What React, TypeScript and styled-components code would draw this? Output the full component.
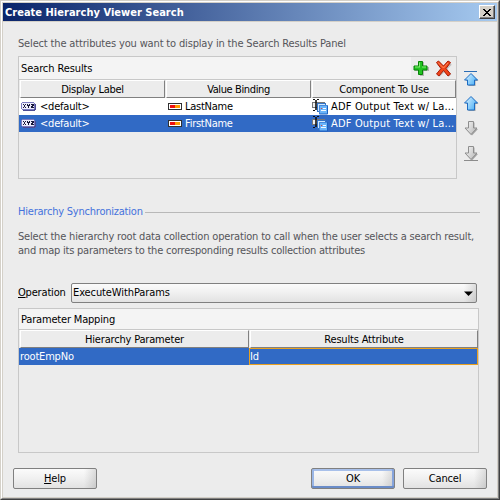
import React from "react";
import styled, { createGlobalStyle, css } from "styled-components";

const GlobalStyle = createGlobalStyle`
  *, *::before, *::after { box-sizing: border-box; }
  html, body { margin: 0; padding: 0; background: #ececec; }
  body {
    font-family: "DejaVu Sans Condensed", "DejaVu Sans", sans-serif;
    font-stretch: condensed;
    font-size: 11px;
    line-height: 14px;
    color: #000;
  }
  svg { display: block; flex: none; }
`;

const Window = styled.main`
  width: 500px;
  height: 500px;
  border: 1px solid;
  border-color: #d4d0c8 #404040 #404040 #d4d0c8;
`;
const Bevel = styled.div`
  height: 100%;
  border: 1px solid;
  border-color: #fff #808080 #808080 #fff;
`;
const Face = styled.div`
  height: 100%;
  border: 1px solid #d4d0c8;
  background: #ececec;
  display: flex;
  flex-direction: column;
`;

const TitleBar = styled.header`
  height: 19px;
  flex: none;
  display: flex;
  align-items: center;
  justify-content: space-between;
  padding: 0 2px;
  border-bottom: 1px solid #d4d0c8;
  background: linear-gradient(to right, #0a246a, #a6caf0);
  color: #fff;
`;
const Text = styled.span<{ $track?: number }>`
  white-space: nowrap;
  letter-spacing: ${(p) => p.$track ?? -0.18}px;
`;
const Title = styled(Text)`
  font-weight: bold;
  padding-top: 1px;
`;
const CloseButton = styled.button`
  width: 16px;
  height: 14px;
  padding: 0;
  display: flex;
  align-items: center;
  justify-content: center;
  background: #d4d0c8;
  border: 1px solid;
  border-color: #fff #404040 #404040 #fff;
  box-shadow: inset -1px -1px #808080;
`;

const Content = styled.div`
  flex: 1;
  display: flex;
  flex-direction: column;
  padding: 15px 17px 0 15px;
`;
const Hint = styled.p<{ $mt?: number }>`
  margin: ${(p) => p.$mt ?? 0}px 0 0;
  color: #55555a;
  display: flex;
  flex-direction: column;
`;

const ResultsArea = styled.section`
  display: flex;
  margin-top: 5px;
`;
const Panel = styled.div<{ $w: number; $h: number; $mt?: number }>`
  width: ${(p) => p.$w}px;
  height: ${(p) => p.$h}px;
  margin-top: ${(p) => p.$mt ?? 0}px;
  flex: none;
  border: 1px solid #c8c8c8;
`;
const PanelBar = styled.div<{ $h: number }>`
  height: ${(p) => p.$h}px;
  display: flex;
  justify-content: space-between;
  align-items: center;
  padding-left: 2px;
  background: #f4f4f4;
  border-bottom: 1px solid #c8c8c8;
`;
const PanelTitle = styled(Text)`
  padding-top: 2px;
`;
const PanelTools = styled.div`
  width: 45px;
  height: 100%;
  background: #ececec;
  display: flex;
  align-items: center;
  gap: 5px;
  padding-left: 2px;
`;
const Row = styled.div<{ $cols: string; $selected?: boolean }>`
  display: grid;
  grid-template-columns: ${(p) => p.$cols};
  height: 17px;
  background: ${(p) => (p.$selected ? "#316ac5" : "#fff")};
  color: ${(p) => (p.$selected ? "#fff" : "#000")};
`;
const HeadRow = styled(Row)`
  height: 18px;
  background: #ececec;
  color: #000;
`;
const HeadCell = styled.div`
  display: flex;
  align-items: center;
  justify-content: center;
  padding-top: 2px;
  margin-left: 1px;
  border: 1px solid;
  border-color: #fff #808080 #808080 #fff;
`;
const Cell = styled.div<{ $pad: number; $gap?: number; $focus?: boolean }>`
  display: flex;
  align-items: center;
  min-width: 0;
  padding-left: ${(p) => p.$pad}px;
  gap: ${(p) => p.$gap ?? 0}px;
  ${(p) => p.$focus && css`border: 1px solid #e8a020;`}
`;
const OrderButtons = styled.div`
  display: flex;
  flex-direction: column;
  gap: 9px;
  padding: 15px 0 0 7px;
`;

const SectionTitle = styled.h2`
  margin: 26px 0 0;
  height: 14px;
  display: flex;
  align-items: center;
  font-size: inherit;
  font-weight: normal;
  color: #4472dc;
`;
const Rule = styled.span`
  width: 335px;
  height: 1px;
  margin-left: auto;
  background: #b8b8b8;
`;

const OperationRow = styled.div`
  display: flex;
  align-items: center;
  height: 20px;
  margin-top: 25px;
`;
const OperationLabel = styled.label`
  width: 53px;
  flex: none;
`;
const glossy = css`
  border: 1px solid #808080;
  border-radius: 2px;
  background:
    linear-gradient(to right, transparent calc(100% - 12px), rgba(110, 110, 110, 0.22)),
    linear-gradient(to bottom, #fbfbfb 0%, #f0f0f0 50%, #e2e2e2 100%);
`;
const Combo = styled.div`
  ${glossy}
  width: 406px;
  height: 20px;
  display: flex;
  align-items: center;
  justify-content: space-between;
  padding: 0 3px 0 1px;
`;

const Footer = styled.footer`
  display: flex;
  margin: 15px -7px 0 -5px;
`;
const PushButton = styled.button<{ $primary?: boolean; $ml?: string }>`
  ${glossy}
  width: 84px;
  height: 21px;
  padding: 0;
  margin-left: ${(p) => p.$ml ?? "0"};
  font: inherit;
  color: #000;
  ${(p) =>
    p.$primary &&
    css`box-shadow: inset 0 -2px #6a8cc8, inset 2px 0 #9ab6e6, inset -2px 0 #86a4dc, inset 0 2px #a8c0ea;`}
`;

const PlusIcon = () => (
  <svg width="17" height="17" viewBox="0 0 17 17">
    <path d="M7 2h4v5h5v4h-5v5h-4v-5h-5v-4h5z" fill="#888" opacity=".55" />
    <path d="M5.500 1.500h4v4.500h4.500v4h-4.500v4.500h-4v-4.500h-4.500v-4h4.500z" fill="#22c322" stroke="#078407" strokeLinejoin="round" />
    <path d="M6.500 7v-4.500M2 7h5M9 7h4" stroke="#82ec72" fill="none" />
  </svg>
);
const DeleteIcon = () => (
  <svg width="17" height="17" viewBox="0 0 17 17">
    <path d="M3.500 3.500l11.500 12M15.500 3.500l-12 12" stroke="#999" strokeWidth="3.500" opacity=".5" />
    <path d="M1.500 2.500l2-1.500 5 5 4.500-5 2.500 1.500-4.500 6 4.500 5.500-2.500 2-4.500-5.500-4.500 5.500-2.500-2 4.500-5.500z" fill="#f0451a" stroke="#a91c06" />
    <path d="M3 2.500l5.500 5.500L13 3" stroke="#ff8a57" fill="none" />
  </svg>
);
const XyzIcon = () => (
  <svg width="15" height="9" viewBox="0 0 15 9" shapeRendering="crispEdges">
    <path d="M2 1h12v1h1v6h-1v1H2z" fill="#4c4c94" />
    <path d="M1 0h12v1h1v6h-1v1H1V7H0V1h1z" fill="#7c7cc0" />
    <rect x="1" y="1" width="12" height="6" fill="#ececfc" />
    <path
      d="M2 2h1v1h1v-1h1v1h-1v2h1v1h-1v-1h-1v1h-1v-1h1v-2h-1zM6 2h1v1h1v-1h1v2h-1v2h-1v-2h-1zM10 2h3v2h-1v1h1v1h-3v-2h1v-1h-1z"
      fill="#16163a"
    />
  </svg>
);
const BindingIcon = () => (
  <svg width="14" height="7" viewBox="0 0 14 7" shapeRendering="crispEdges">
    <rect width="14" height="7" fill="#303030" />
    <rect x="1" y="1" width="12" height="5" fill="#fff" />
    <rect x="2" y="2" width="5" height="3" fill="#ee1010" />
    <rect x="7" y="2" width="5" height="3" fill="#ff9c00" />
  </svg>
);
const ComponentIcon = () => (
  <svg width="16" height="16" viewBox="0 0 16 16">
    <rect x=".5" y="3.500" width="12" height="5" fill="#f0f0f0" stroke="#777" />
    <path d="M1 .5h2M5 .5h2M1 11.500h2M5 11.500h2" stroke="#111" />
    <path d="M4 1v10" stroke="#111" strokeWidth="1.600" />
    <rect x="5.500" y="4.500" width="8" height="8" fill="#d4e8fc" stroke="#3475c8" />
    <rect x="7" y="6" width="9" height="9.500" rx="1" fill="#1c60c0" />
    <rect x="7.500" y="6.500" width="7.500" height="8" fill="#6ab4fa" />
    <path d="M11 9.500h3M9 11.500h5" stroke="#f4faff" />
    <path d="M9 9.500h1" stroke="#d44" />
  </svg>
);
const MoveIcon = ({ down, bar }: { down?: boolean; bar?: boolean }) => {
  const id = `arrow-${down ? "down" : "up"}-${bar ? "end" : "step"}`;
  const top = bar ? 2.5 : 0.5;
  const shape = down
    ? "M4.500 .5h5v6.500h3.500l-6 6.500-6-6.500h3.500z"
    : `M7 ${top}l6.500 6.500h-3v${bar ? 5 : 7}h-7v-${bar ? 5 : 7}h-3z`;
  return (
    <svg width="16" height="16" viewBox="0 0 16 16">
      <defs>
        <linearGradient id={id} x1="0" x2="1" y1="0" y2="0.6">
          <stop offset="0" stopColor={down ? "#fafafa" : "#e4f6ff"} />
          <stop offset="1" stopColor={down ? "#bdbdbd" : "#55b4f6"} />
        </linearGradient>
      </defs>
      <path d={shape} transform="translate(1 1)" fill="#777" opacity=".6" />
      <path d={shape} fill={`url(#${id})`} stroke={down ? "#8e8e8e" : "#1c6cc4"} strokeLinejoin="round" />
      {bar && !down && <path d="M0 .5h13" stroke="#2a6cb4" />}
      {bar && down && <path d="M0 14.500h14" stroke="#8c8c8c" />}
    </svg>
  );
};
const CloseGlyph = () => (
  <svg width="8" height="7" viewBox="0 0 8 7" shapeRendering="crispEdges">
    <path d="M0 0h2v1h1v1h2V1h1V0h2v1H7v1H6v1H5v1h1v1h1v1h1v1H6V6H5V5H3v1H2v1H0V6h1V5h1V4h1V3H2V2H1V1H0z" />
  </svg>
);
const DropGlyph = () => (
  <svg width="9" height="5" viewBox="0 0 9 5">
    <path d="M0 .5h9L4.500 5z" />
  </svg>
);

const RESULT_COLS = "146px 146px 145px";
const PARAM_COLS = "230px 229px";
const RESULTS = [
  { binding: "LastName", selected: false },
  { binding: "FirstName", selected: true },
];

export default function App() {
  return (
    <>
      <GlobalStyle />
      <Window>
        <Bevel>
          <Face>
            <TitleBar>
              <Title $track={0.02}>Create Hierarchy Viewer Search</Title>
              <CloseButton aria-label="Close"><CloseGlyph /></CloseButton>
            </TitleBar>
            <Content>
              <Hint>
                <Text $track={-0.16}>Select the attributes you want to display in the Search Results Panel</Text>
              </Hint>
              <ResultsArea>
                <Panel $w={439} $h={123}>
                  <PanelBar $h={23}>
                    <PanelTitle $track={-0.1}>Search Results</PanelTitle>
                    <PanelTools><PlusIcon /><DeleteIcon /></PanelTools>
                  </PanelBar>
                  <HeadRow $cols={RESULT_COLS}>
                    <HeadCell><Text $track={-0.3}>Display Label</Text></HeadCell>
                    <HeadCell><Text $track={-0.38}>Value Binding</Text></HeadCell>
                    <HeadCell><Text>Component To Use</Text></HeadCell>
                  </HeadRow>
                  {RESULTS.map((r) => (
                    <Row key={r.binding} $cols={RESULT_COLS} $selected={r.selected}>
                      <Cell $pad={2} $gap={4}><XyzIcon /><Text $track={-0.2}>&lt;default&gt;</Text></Cell>
                      <Cell $pad={3} $gap={3}><BindingIcon /><Text $track={-0.25}>{r.binding}</Text></Cell>
                      <Cell $pad={1} $gap={3}><ComponentIcon /><Text $track={0.17}>ADF Output Text w/ La...</Text></Cell>
                    </Row>
                  ))}
                </Panel>
                <OrderButtons>
                  <MoveIcon bar />
                  <MoveIcon />
                  <MoveIcon down />
                  <MoveIcon down bar />
                </OrderButtons>
              </ResultsArea>
              <SectionTitle><Text $track={-0.22}>Hierarchy Synchronization</Text><Rule /></SectionTitle>
              <Hint $mt={11}>
                <Text $track={-0.18}>Select the hierarchy root data collection operation to call when the user selects a search result,</Text>
                <Text $track={-0.23}>and map its parameters to the corresponding results collection attributes</Text>
              </Hint>
              <OperationRow>
                <OperationLabel><Text><u>O</u>peration</Text></OperationLabel>
                <Combo><Text $track={-0.1}>ExecuteWithParams</Text><DropGlyph /></Combo>
              </OperationRow>
              <Panel $w={461} $h={145} $mt={5}>
                <PanelBar $h={21}><PanelTitle>Parameter Mapping</PanelTitle></PanelBar>
                <HeadRow $cols={PARAM_COLS}>
                  <HeadCell><Text>Hierarchy Parameter</Text></HeadCell>
                  <HeadCell><Text>Results Attribute</Text></HeadCell>
                </HeadRow>
                <Row $cols={PARAM_COLS} $selected>
                  <Cell $pad={1}><Text>rootEmpNo</Text></Cell>
                  <Cell $pad={0} $focus><Text>Id</Text></Cell>
                </Row>
              </Panel>
              <Footer>
                <PushButton><Text><u>H</u>elp</Text></PushButton>
                <PushButton $primary $ml="auto"><Text>OK</Text></PushButton>
                <PushButton $ml="8px"><Text>Cancel</Text></PushButton>
              </Footer>
            </Content>
          </Face>
        </Bevel>
      </Window>
    </>
  );
}
